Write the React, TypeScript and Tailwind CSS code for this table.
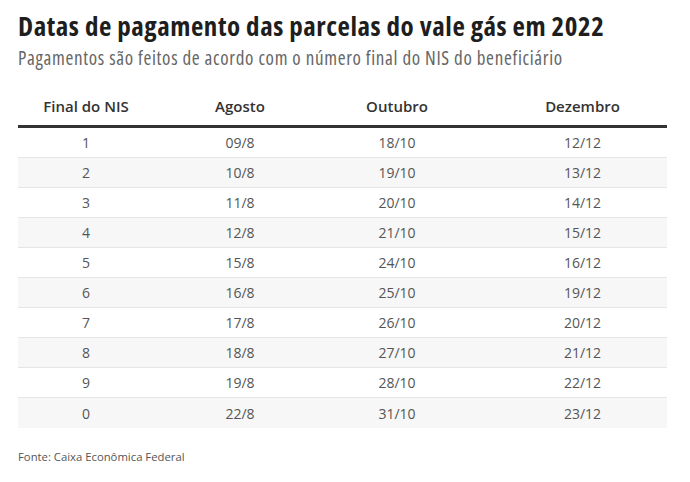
const rows = [
  ["1", "09/8", "18/10", "12/12"],
  ["2", "10/8", "19/10", "13/12"],
  ["3", "11/8", "20/10", "14/12"],
  ["4", "12/8", "21/10", "15/12"],
  ["5", "15/8", "24/10", "16/12"],
  ["6", "16/8", "25/10", "19/12"],
  ["7", "17/8", "26/10", "20/12"],
  ["8", "18/8", "27/10", "21/12"],
  ["9", "19/8", "28/10", "22/12"],
  ["0", "22/8", "31/10", "23/12"],
];

const cols = "grid grid-cols-[136px_172px_142px_1fr]";

export default function App() {
  return (
    <div className="w-[690px] h-[482px] bg-white px-[18px] pt-[8px] font-['Open_Sans',sans-serif] overflow-hidden">
      <h1 className="text-[27px] leading-[36px] font-bold font-stretch-condensed text-[#1e1e1e] tracking-[0.54px]">
        Datas de pagamento das parcelas do vale gás em 2022
      </h1>
      <p className="text-[19px] leading-[26px] font-stretch-condensed text-[#666] mt-[1px] tracking-[0.69px]">
        Pagamentos são feitos de acordo com o número final do NIS do beneficiário
      </p>

      <div className="mt-[19px] w-[649px]">
        <div className={`${cols} h-[38px] pb-[2px] items-center text-[15px] font-semibold text-[#333] border-b-[3px] border-[#333]`}>
          <div className="text-center">Final do NIS</div>
          <div className="text-center">Agosto</div>
          <div className="text-center">Outubro</div>
          <div className="text-center pl-[30px]">Dezembro</div>
        </div>
        {rows.map((r, i) => (
          <div
            key={r[0]}
            className={`${cols} h-[30px] items-center text-[14px] text-[#555] ${i < rows.length - 1 ? "border-b border-[#e6e6e6]" : ""} ${i % 2 === 1 ? "bg-[#f7f7f7]" : "bg-white"}`}
          >
            <div className="text-center">{r[0]}</div>
            <div className="text-center">{r[1]}</div>
            <div className="text-center">{r[2]}</div>
            <div className="text-center pl-[30px]">{r[3]}</div>
          </div>
        ))}
      </div>

      <p className="mt-[21px] text-[11.3px] text-[#555]">Fonte: Caixa Econômica Federal</p>
    </div>
  );
}
